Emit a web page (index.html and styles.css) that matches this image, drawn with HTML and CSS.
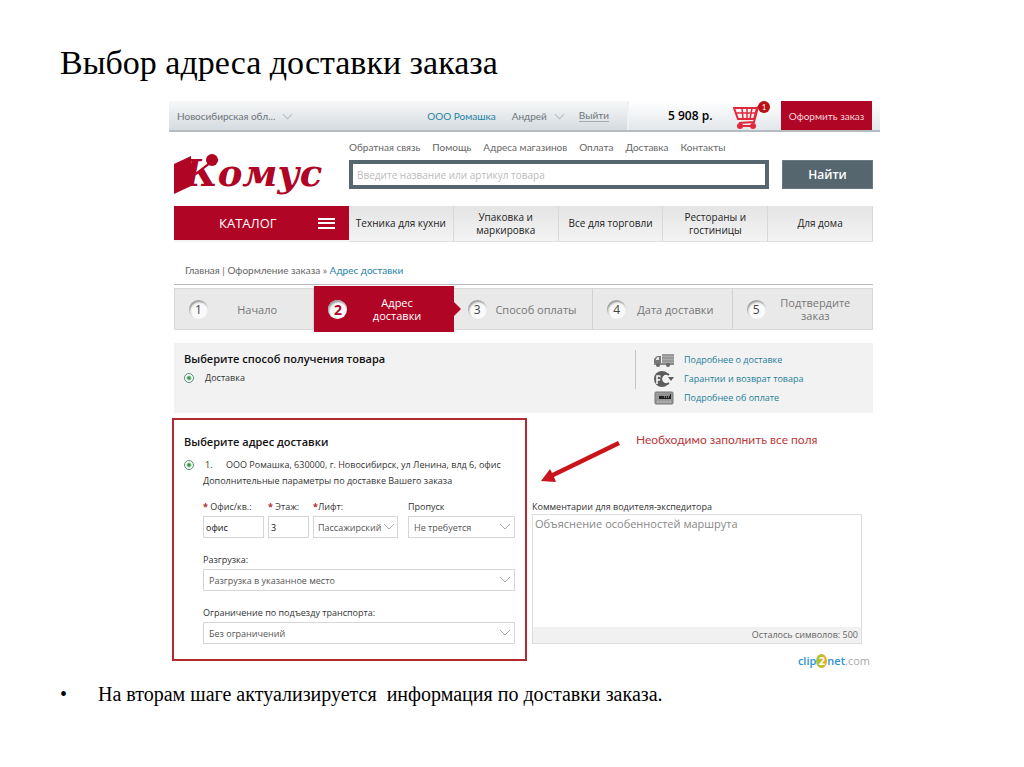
FILE: index.html
```html
<!DOCTYPE html>
<html lang="ru">
<head>
  <meta charset="UTF-8">
  <meta name="viewport" content="width=device-width, initial-scale=1.0">
  <title>Выбор адреса доставки заказа</title>
  <link rel="stylesheet" href="styles.css">
</head>
<body>
  <h1 class="slide-title">Выбор адреса доставки заказа</h1>

  <main class="shop">
    <div class="topbar">
      <div class="topbar-user">
        <button class="drop region">Новосибирская обл...</button>
        <a href="#" class="company">ООО Ромашка</a>
        <button class="drop">Андрей</button>
        <a href="#" class="logout">Выйти</a>
      </div>
      <div class="topbar-cart">
        <span class="total">5 908 р.</span>
        <a href="#" class="cart" aria-label="Корзина">
          <svg width="30" height="27" viewBox="0 0 30 27" fill="none" stroke="#e02a3c">
            <path d="M1 6H24L21 17H5L1 6Z" stroke-width="2"/>
            <path d="M3 11H22M9 6L10 17M14 6V17M19 6L17 17" stroke-width="1.500"/>
            <path d="M28 3L25 5L21 20L6 21" stroke-width="2"/>
            <path d="M7 24H20" stroke-width="2"/>
            <circle cx="7" cy="24" r="3" fill="#e02a3c" stroke="none"/>
            <circle cx="20" cy="24" r="3" fill="#e02a3c" stroke="none"/>
          </svg>
          <span class="badge">1</span>
        </a>
        <button class="checkout">Оформить заказ</button>
      </div>
    </div>

    <div class="content">
      <header class="header">
        <a href="#" class="logo" aria-label="Комус">
          <svg width="150" height="42" viewBox="0 0 150 42" fill="#b00525">
            <path d="M0 11L17 3V33L0 41Z"/>
            <circle cx="38" cy="7" r="6"/>
            <text class="logo-text" x="10" y="33">Комус</text>
          </svg>
        </a>
        <div class="header-main">
          <nav class="links">
            <a href="#">Обратная связь</a>
            <a href="#">Помощь</a>
            <a href="#">Адреса магазинов</a>
            <a href="#">Оплата</a>
            <a href="#">Доставка</a>
            <a href="#">Контакты</a>
          </nav>
          <form class="search">
            <input type="text" class="search-input" aria-label="Поиск" placeholder="Введите название или артикул товара">
            <button type="button" class="search-btn">Найти</button>
          </form>
        </div>
      </header>

      <nav class="menu">
        <button class="catalog">
          <span>КАТАЛОГ</span>
          <svg width="17" height="11" viewBox="0 0 17 11" fill="#fff">
            <path d="M0 0H17V2H0ZM0 4H17V6H0ZM0 9H17V11H0Z"/>
          </svg>
        </button>
        <a href="#">Техника для кухни</a>
        <a href="#">Упаковка и<br>маркировка</a>
        <a href="#">Все для торговли</a>
        <a href="#">Рестораны и<br>гостиницы</a>
        <a href="#">Для дома</a>
      </nav>

      <div class="crumbs">
        <a href="#">Главная</a> | <a href="#">Оформление заказа</a> » <a href="#" class="current">Адрес доставки</a>
      </div>

      <ol class="steps">
        <li><span class="num">1</span><span class="step-name">Начало</span></li>
        <li class="active"><span class="num">2</span><span class="step-name">Адрес<br>доставки</span></li>
        <li><span class="num">3</span><span class="step-name">Способ оплаты</span></li>
        <li><span class="num">4</span><span class="step-name">Дата доставки</span></li>
        <li><span class="num">5</span><span class="step-name">Подтвердите<br>заказ</span></li>
      </ol>

      <section class="method">
        <div class="method-choice">
          <h2>Выберите способ получения товара</h2>
          <label class="choice"><input type="radio" name="method" checked> Доставка</label>
        </div>
        <ul class="help">
          <li>
            <svg width="20" height="14" viewBox="0 0 20 14">
              <path d="M8 1H20V10H8Z" fill="#aaa"/>
              <path d="M8 2H20M8 5H20M8 8H20" stroke="#888"/>
              <path d="M0 10V6L3 3H7V11H0Z" fill="#777"/>
              <path d="M2 6L3.500 4H5V7H2Z" fill="#e4e4e4"/>
              <path d="M0 10H20V12H0Z" fill="#888"/>
              <circle cx="4" cy="12" r="2" fill="#666"/>
              <circle cx="14" cy="12" r="2" fill="#666"/>
            </svg>
            <a href="#">Подробнее о доставке</a>
          </li>
          <li>
            <svg width="20" height="16" viewBox="0 0 20 16">
              <circle cx="8" cy="8" r="8" fill="#5c5c5c"/>
              <path d="M3 13V5H5A2 2 0 0 1 5 9H3" fill="none" stroke="#fff" stroke-width="1.500"/>
              <circle cx="13" cy="8" r="5" fill="#f2f2f2"/>
              <path d="M15 4A5 5 0 1 0 15 12" fill="none" stroke="#5c5c5c" stroke-width="2"/>
              <path d="M14 6H20L17 10Z" fill="#5c5c5c"/>
            </svg>
            <a href="#">Гарантии и возврат товара</a>
          </li>
          <li>
            <svg width="20" height="14" viewBox="0 0 20 14">
              <rect x="1" y="1" width="18" height="12" rx="1" fill="#999" stroke="#777"/>
              <rect x="5" y="3" width="12" height="5" fill="#222"/>
              <path d="M5 4H16" stroke="#fff"/>
              <path d="M10 6H15" stroke="#ccc" stroke-dasharray="1 1"/>
              <path d="M3 11H17" stroke="#ccc" stroke-dasharray="2 1"/>
            </svg>
            <a href="#">Подробнее об оплате</a>
          </li>
        </ul>
      </section>
    </div>

    <div class="delivery">
      <section class="address">
        <h2>Выберите адрес доставки</h2>
        <label class="choice"><input type="radio" name="address" checked> <span class="idx">1.</span>ООО Ромашка, 630000, г. Новосибирск, ул Ленина, влд 6, офис</label>
        <div class="params">
          <p>Дополнительные параметры по доставке Вашего заказа</p>
          <div class="row">
            <div class="field office">
              <label for="office"><b>*</b> Офис/кв.:</label>
              <input type="text" id="office" value="офис">
            </div>
            <div class="field floor">
              <label for="floor"><b>*</b> Этаж:</label>
              <input type="text" id="floor" value="3">
            </div>
            <div class="field lift">
              <label for="lift"><b>*</b>Лифт:</label>
              <select id="lift"><option>Пассажирский</option></select>
            </div>
            <div class="field pass">
              <label for="pass">Пропуск</label>
              <select id="pass"><option>Не требуется</option></select>
            </div>
          </div>
          <div class="field">
            <label for="unload">Разгрузка:</label>
            <select id="unload"><option>Разгрузка в указанное место</option></select>
          </div>
          <div class="field">
            <label for="limits">Ограничение по подъезду транспорта:</label>
            <select id="limits"><option>Без ограничений</option></select>
          </div>
        </div>
      </section>

      <section class="side">
        <div class="note">
          <svg width="80" height="42" viewBox="0 0 80 42" fill="#c9141b">
            <path d="M77 0L79 4L13 36L15 41L0 40L9 28L11 32Z"/>
          </svg>
          <span>Необходимо заполнить все поля</span>
        </div>
        <label for="comment" class="comment-label">Комментарии для водителя-экспедитора</label>
        <div class="comment">
          <textarea id="comment" placeholder="Объяснение особенностей маршрута"></textarea>
          <div class="left">Осталось символов: 500</div>
        </div>
        <div class="clip"><span class="clip-blue">clip</span><span class="clip-two">2</span><span class="clip-blue">net</span><span class="clip-com">.com</span></div>
      </section>
    </div>
  </main>

  <ul class="slide-text">
    <li>На вторам шаге актуализируется&nbsp; информация по доставки заказа.</li>
  </ul>
</body>
</html>
```

FILE: styles.css
```css
* {
  box-sizing: border-box;
}
body {
  margin: 0;
  padding: 43px 60px 0;
  background: #fff;
  color: #000;
  font-family: "Liberation Serif", serif;
}
h1, h2, p, ol, ul {
  margin: 0;
  padding: 0;
  font-weight: normal;
}
button, input, select, textarea {
  margin: 0;
  font-family: inherit;
  font-size: inherit;
}
a {
  color: inherit;
  text-decoration: none;
}
.slide-title {
  font-size: 34px;
  line-height: 40px;
}
.shop {
  margin: 18px 84px 0 109px;
  font-family: "Open Sans", "Noto Sans", sans-serif;
  font-size: 9px;
  line-height: 12px;
  color: #333;
}
.content {
  padding: 0 7px 0 5px;
}

/* top bar */
.topbar {
  display: flex;
  height: 31px;
  border-bottom: 2px solid #b4bcc1;
  color: #6d7579;
  font-family: Lato, "Open Sans", sans-serif;
  font-size: 10px;
}
.topbar-user {
  flex: 1;
  display: flex;
  align-items: center;
  gap: 16px;
  padding: 0 18px 0 8px;
  background: linear-gradient(#f7f8f9, #d5dbdf);
}
.topbar-cart {
  display: flex;
  align-items: center;
  width: 253px;
  padding-right: 8px;
  background: linear-gradient(#fff, #e3e7ea);
  border-left: 2px solid #eef1f2;
}
.drop {
  display: flex;
  align-items: center;
  gap: 9px;
  padding: 0;
  border: none;
  background: none;
  color: inherit;
}
.drop::after {
  content: "";
  width: 6px;
  height: 6px;
  margin-bottom: 3px;
  border: solid #b5bcc0;
  border-width: 0 1px 1px 0;
  transform: rotate(45deg);
}
.region {
  margin-right: auto;
}
.company, .current {
  color: #1f83a5;
}
.logout {
  border-bottom: 1px solid #a5acb0;
}
.total {
  margin-left: 39px;
  font-family: "Open Sans", sans-serif;
  font-size: 12px;
  font-weight: 600;
  color: #000;
}
.cart {
  position: relative;
  margin-left: auto;
  margin-right: 18px;
}
.cart svg {
  display: block;
}
.badge {
  position: absolute;
  top: -1px;
  right: -7px;
  width: 12px;
  height: 12px;
  border-radius: 50%;
  background: #b90f16;
  color: #fff;
  font-size: 8px;
  text-align: center;
}
.checkout {
  align-self: stretch;
  width: 91px;
  padding: 0;
  border: none;
  background: #b00525;
  color: #f3d5da;
}

/* header */
.header {
  display: flex;
  padding-top: 9px;
}
.logo {
  width: 175px;
  padding-top: 12px;
}
.logo svg {
  display: block;
  overflow: visible;
}
.logo-text {
  font: italic bold 37px "DejaVu Serif", serif;
}
.header-main {
  flex: 1;
}
.links {
  display: flex;
  gap: 12px;
  color: #666;
  font-family: Lato, "Open Sans", sans-serif;
  font-size: 10px;
}
.search {
  display: flex;
  gap: 13px;
  margin-top: 7px;
}
.search-input {
  flex: 1;
  height: 29px;
  padding: 0 4px;
  border: 4px solid #55666f;
  background: #fff;
  font-size: 10px;
}
.search-input::placeholder {
  color: #bbb;
}
.search-btn {
  width: 91px;
  border: 1px solid #6b7a83;
  background: #55666f;
  color: #fff;
  font-size: 12px;
  font-weight: 600;
}

/* catalog menu */
.menu {
  display: grid;
  grid-template-columns: 175px repeat(5, 1fr);
  height: 36px;
  margin-top: 11px;
  background: linear-gradient(#e4e4e4, #f4f4f4);
  color: #222;
  font-size: 10px;
  line-height: 13px;
}
.menu a {
  display: flex;
  align-items: center;
  justify-content: center;
  border-right: 1px solid #d8d8d8;
  border-bottom: 1px solid #e2e2e2;
  text-align: center;
}
.catalog {
  display: flex;
  align-items: center;
  justify-content: space-between;
  height: 34px;
  padding: 0 14px 0 45px;
  border: none;
  background: #b00525;
  color: #fff;
  font-size: 13px;
}

/* steps */
.crumbs {
  margin-top: 22px;
  padding: 0 11px 8px;
  border-bottom: 1px solid #bbb;
  color: #666;
  font-family: Lato, "Open Sans", sans-serif;
  font-size: 10px;
}
.steps {
  display: grid;
  grid-template-columns: repeat(5, 1fr);
  height: 42px;
  margin-top: 3px;
  background: #e9e9e9;
  border: 1px solid #d8d8d8;
  color: #777;
  font-size: 11px;
  line-height: 13px;
  list-style: none;
}
.steps li {
  display: flex;
  align-items: center;
  padding: 0 7px 0 14px;
  border-right: 1px solid #d2d2d2;
}
.steps li:last-child {
  border-right: none;
}
.steps .active {
  position: relative;
  margin: -3px 0;
  background: #b00525;
  border: none;
  color: #fff;
}
.steps .active::after {
  content: "";
  position: absolute;
  left: 100%;
  top: 16px;
  border: 7px solid transparent;
  border-left-color: #b00525;
  border-right: none;
}
.num {
  width: 19px;
  height: 19px;
  border-radius: 50%;
  background: #fafafa;
  box-shadow: inset 1px 2px 2px #999;
  color: #444;
  font-size: 12px;
  line-height: 20px;
  text-align: center;
}
.active .num {
  color: #b00525;
  font-size: 14px;
  font-weight: bold;
}
.step-name {
  flex: 1;
  text-align: center;
}

/* delivery method */
.method {
  display: flex;
  justify-content: space-between;
  height: 70px;
  margin-top: 13px;
  padding: 7px 10px;
  background: #f2f2f2;
}
h2 {
  font-size: 11px;
  line-height: 18px;
  font-weight: 600;
  color: #111;
}
.choice {
  display: flex;
  align-items: center;
  height: 20px;
}
.choice input {
  appearance: none;
  width: 10px;
  height: 10px;
  margin-right: 11px;
  border: 1px solid #5b8a78;
  border-radius: 50%;
  background: radial-gradient(#2f9a3c 1px, #fff 3px);
}
.help {
  width: 228px;
  height: 39px;
  padding-left: 18px;
  border-left: 1px solid #c4c4c4;
  color: #1c7f99;
  list-style: none;
}
.help li {
  display: flex;
  align-items: center;
  gap: 10px;
  height: 19px;
}

/* address form */
.delivery {
  display: flex;
  align-items: flex-start;
  gap: 5px;
  margin: 5px 18px 0 3px;
}
.address {
  width: 355px;
  padding: 13px 10px 15px;
  border: 2px solid #b02a30;
}
.address .choice {
  margin-top: 4px;
}
.idx {
  width: 21px;
}
.params {
  padding-left: 19px;
}
.row {
  display: flex;
  gap: 4px;
}
.field {
  margin-top: 16px;
}
.row .field {
  margin-top: 14px;
}
.field label {
  display: block;
  height: 15px;
  white-space: nowrap;
}
.field b {
  color: #b02a30;
}
.field input, .field select {
  display: block;
  width: 100%;
  height: 22px;
  padding: 0 5px;
  border: 1px solid #d6d6d6;
  border-radius: 0;
  background: #fff;
  color: #555;
}
.field input {
  padding: 0 2px;
  color: #111;
}
.field select {
  appearance: none;
  background: #fff url("data:image/svg+xml,%3Csvg xmlns='http://www.w3.org/2000/svg' width='10' height='6'%3E%3Cpath d='M0 0L5 5L10 0' fill='none' stroke='%23aaa'/%3E%3C/svg%3E") no-repeat right 4px center;
}
.office {
  width: 61px;
}
.floor {
  width: 41px;
}
.lift {
  width: 85px;
}
.field.lift select {
  padding: 0 4px;
  background-position: right 3px center;
}
.pass {
  flex: 1;
  padding-left: 6px;
}

/* comment */
.side {
  flex: 1;
}
.note {
  display: flex;
  gap: 15px;
  padding: 23px 0 0 9px;
  color: #b8383b;
  font-family: Lato, "Open Sans", sans-serif;
  font-size: 12px;
}
.note span {
  margin-top: -7px;
}
.comment-label {
  display: block;
  margin-top: 18px;
  height: 13px;
}
.comment {
  border: 1px solid #ddd;
}
.comment textarea {
  display: block;
  width: 100%;
  height: 112px;
  padding: 1px 2px;
  border: none;
  resize: none;
  font-size: 11px;
}
.comment textarea::placeholder {
  color: #888;
}
.left {
  padding: 2px 3px;
  background: #f1f1f1;
  color: #666;
  text-align: right;
}
.clip {
  margin: 10px -8px 0 0;
  font-size: 11px;
  line-height: 14px;
  text-align: right;
}
.clip-blue {
  color: #2d93cf;
  font-weight: 600;
}
.clip-two {
  display: inline-block;
  width: 11px;
  border-radius: 50%;
  background: linear-gradient(90deg, #9aca3c, #f5a623);
  color: #fff;
  font-weight: bold;
  text-align: center;
}
.clip-com {
  color: #aaa;
}

.slide-text {
  margin-top: 14px;
  padding-left: 38px;
  font-size: 20px;
  line-height: 24px;
}
.slide-text li {
  list-style: none;
}
.slide-text li::before {
  content: "•";
  float: left;
  margin-left: -38px;
}
```
